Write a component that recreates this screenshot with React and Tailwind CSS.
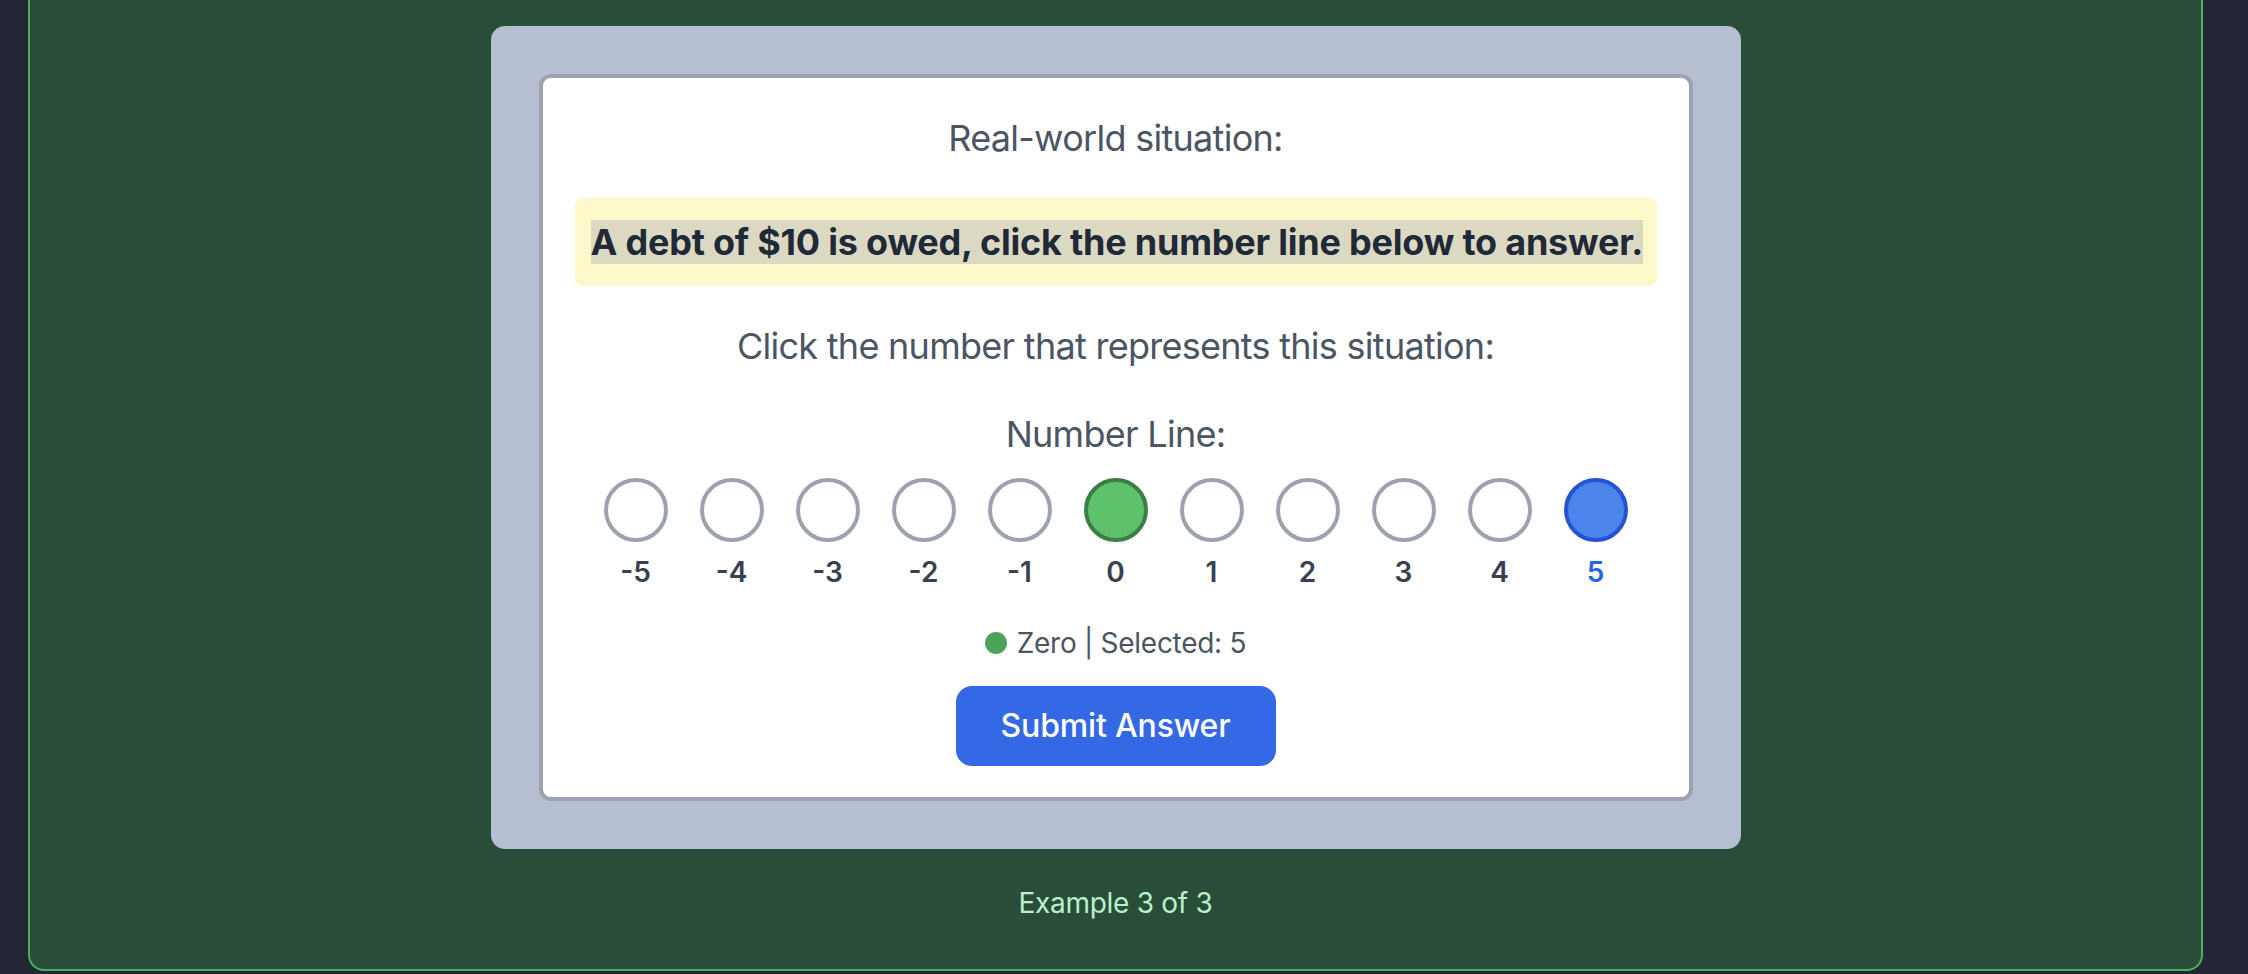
import { useState } from 'react';

const NUMBERS = [-5, -4, -3, -2, -1, 0, 1, 2, 3, 4, 5];

const NumberLine = ({ selected, onSelect }) => (
  <div className="flex justify-center gap-8">
    {NUMBERS.map((n) => {
      const isZero = n === 0;
      const isSelected = n === selected;
      let circle = 'bg-white border-[#9ca3af]';
      if (isZero) circle = 'bg-[#5ec16b] border-[#3b7f45]';
      if (isSelected) circle = 'bg-[#4b85ec] border-[#2752d4]';
      return (
        <div key={n} className="flex flex-col items-center">
          <button
            onClick={() => onSelect(n)}
            className={`w-16 h-16 rounded-full border-4 ${circle}`}
          />
          <span
            className={`mt-[10px] text-[28px] leading-[40px] font-semibold ${
              isSelected ? 'text-[#2563eb]' : 'text-[#374151]'
            }`}
          >
            {n}
          </span>
        </div>
      );
    })}
  </div>
);

const App = () => {
  const [selected, setSelected] = useState(5);

  return (
    <div className="min-h-screen bg-[#222636] pl-[28px] pr-[45px] font-['Inter',sans-serif]">
      <div className="bg-[#294d39] border-2 border-t-0 border-[#4caf5c] rounded-b-[16px] pt-[26px] pb-[46px] flex flex-col items-center">
        {/* Example panel */}
        <div className="w-[1250px] bg-[#b6bfd2] rounded-[14px] p-12">
          <div className="bg-white border-4 border-[#9ca3af] rounded-[12px] p-8 pb-[31px] text-center">
            <p className="text-[36px] leading-[56px] tracking-[-0.02em] text-[#4b5563]">Real-world situation:</p>

            <div className="mt-8 bg-[#fdf8c9] rounded-[8px] p-4">
              <span className="bg-[#dcd9c2] text-[#1f2937] font-bold text-[36px] leading-[56px] tracking-[-0.006em] whitespace-nowrap">
                A debt of $10 is owed, click the number line below to answer.
              </span>
            </div>

            <p className="mt-8 text-[36px] leading-[56px] tracking-[-0.02em] text-[#4b5563]">
              Click the number that represents this situation:
            </p>

            <p className="mt-8 text-[36px] leading-[56px] tracking-[-0.02em] text-[#4b5563]">Number Line:</p>

            <div className="mt-4">
              <NumberLine selected={selected} onSelect={setSelected} />
            </div>

            <div className="mt-[31px] flex items-center justify-center gap-[10px]">
              <span className="w-[22px] h-[22px] rounded-full bg-[#4ea35a]" />
              <span className="text-[28px] leading-[40px] tracking-[-0.01em] text-[#4b5563]">
                Zero | Selected: {selected}
              </span>
            </div>

            <button className="mt-[23px] w-[320px] h-[80px] bg-[#3568e4] text-white text-[32px] leading-[48px] font-medium tracking-[-0.005em] rounded-[16px]">
              Submit Answer
            </button>
          </div>
        </div>

        <p className="mt-[34px] text-[28px] leading-[40px] tracking-[-0.01em] text-[#bbf0cb]">Example 3 of 3</p>
      </div>
    </div>
  );
};

export default App;
